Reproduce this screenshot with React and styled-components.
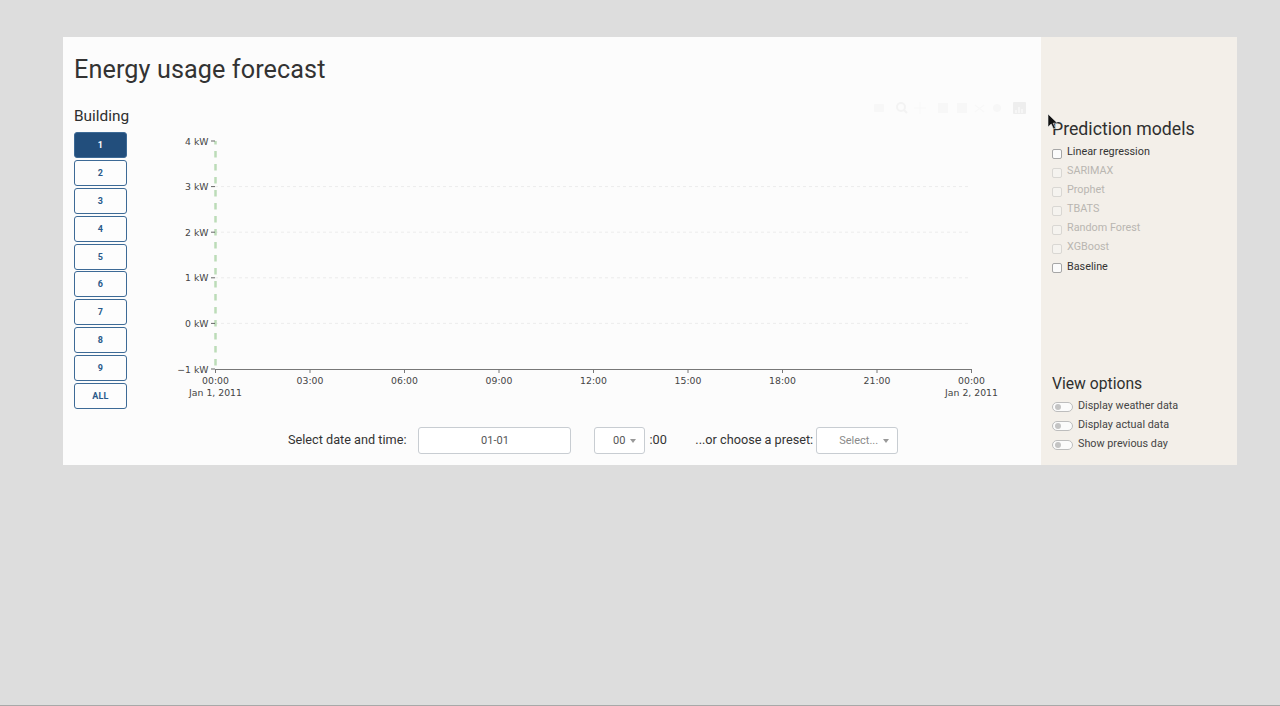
import React from "react";
import styled, { createGlobalStyle } from "styled-components";

const Global = createGlobalStyle`
  html, body { margin: 0; padding: 0; height: 100%; overflow: hidden; }
  body { background: #dddddd; font-family: Roboto, "Liberation Sans", sans-serif; }
`;

const Page = styled.div`
  box-sizing: border-box;
  height: 706px;
  padding: 37px 43px 0 63px;
  border-bottom: 1px solid #a8a8a8;
`;

const Frame = styled.div`
  display: grid;
  grid-template-columns: 978px 196px;
  height: 428px;
  background: #fcfcfc;
`;

const Main = styled.main`
  display: flex;
  flex-direction: column;
  padding: 15px 11px 0;
  min-width: 0;
`;

const Title = styled.h1`
  margin: 0;
  font-size: 25.2px;
  line-height: 36px;
  font-weight: 400;
  color: #333;
  letter-spacing: 0.1px;
`;

const Body = styled.div`
  display: flex;
  margin-top: 18px;
`;

const BuildingColumn = styled.div`
  width: 53px;
  flex: none;
`;

const SectionHeading = styled.h2`
  margin: 0;
  font-size: 17.7px;
  line-height: 21px;
  font-weight: 400;
  color: #2f2f2f;
  white-space: nowrap;
`;

const BuildingHeading = styled(SectionHeading)`
  font-size: 15.4px;
  margin-bottom: 5px;
`;

const ButtonStack = styled.div`
  display: flex;
  flex-direction: column;
  gap: 1.9px;
`;

const BuildingButton = styled.button`
  box-sizing: border-box;
  width: 53px;
  height: 26px;
  padding: 0;
  border: 1px solid #3d6a96;
  border-radius: 3px;
  background: ${(p) => (p.$active ? "#224e7c" : "#fdfdfd")};
  color: ${(p) => (p.$active ? "#ffffff" : "#2a5a8a")};
  font-family: Roboto, sans-serif;
  font-size: 9px;
  font-weight: 700;
  letter-spacing: 0.2px;
`;

const ChartWrap = styled.div`
  position: relative;
  width: 900px;
  height: 321px;
`;

const ChartSvg = styled.svg`
  display: block;
`;

const Modebar = styled.svg`
  position: absolute;
  top: -6px;
  right: 0;
`;

const Controls = styled.div`
  display: flex;
  align-items: center;
  padding-left: 214px;
  height: 27px;
  font-size: 12.7px;
  color: #333;
`;

const ControlLabel = styled.span`
  white-space: nowrap;
  margin-right: ${(p) => p.$gap || 0}px;
  margin-bottom: 2px;
`;

const TimeSuffix = styled(ControlLabel)`
  margin-left: 4px;
`;

const DateField = styled.div`
  box-sizing: border-box;
  width: 153px;
  height: 27px;
  border: 1px solid #c8cdd2;
  border-radius: 3px;
  background: #fff;
  display: flex;
  align-items: center;
  justify-content: center;
  font-size: 11px;
  color: #555;
  margin-right: 23px;
`;

const Select = styled.div`
  box-sizing: border-box;
  width: ${(p) => p.$width}px;
  height: 27px;
  border: 1px solid #c8cdd2;
  border-radius: 3px;
  background: #fff;
  display: flex;
  align-items: center;
  justify-content: flex-end;
  gap: 5px;
  padding-right: 8px;
  font-size: 11px;
  color: ${(p) => (p.$muted ? "#8a8a8a" : "#555")};
`;

const Caret = styled.span`
  width: 0;
  height: 0;
  border-left: 3.5px solid transparent;
  border-right: 3.5px solid transparent;
  border-top: 4px solid #999;
`;

const Sidebar = styled.aside`
  position: relative;
  background: #f3efe9;
  padding: 81.5px 11px 0;
  display: flex;
  flex-direction: column;
`;

const ModelHeading = styled(SectionHeading)`
  margin-bottom: 2.5px;
`;

const OptionList = styled.div`
  display: flex;
  flex-direction: column;
`;

const Option = styled.label`
  display: flex;
  align-items: center;
  height: 19.08px;
  font-size: 10.8px;
  color: ${(p) => (p.$disabled ? "#b9b6b1" : "#333")};
  white-space: nowrap;
`;

const Box = styled.span`
  box-sizing: border-box;
  width: 10px;
  height: 10px;
  margin: 4px 5px 0 0;
  border: 1px solid ${(p) => (p.$disabled ? "#d9d7d3" : "#a6a6a6")};
  border-radius: 2px;
  background: ${(p) => (p.$disabled ? "#f5f3ef" : "#fbfbfb")};
  flex: none;
`;

const ViewOptions = styled.div`
  margin-top: 97px;
`;

const ViewHeading = styled(SectionHeading)`
  font-size: 15.7px;
  margin-bottom: 2px;
`;

const Toggle = styled.span`
  box-sizing: border-box;
  position: relative;
  width: 21px;
  height: 10px;
  margin: 3px 5px 0 0;
  border: 1px solid #bdbdbd;
  border-radius: 5px;
  background: #fbfbfb;
  flex: none;
  &::after {
    content: "";
    position: absolute;
    left: 2px;
    top: 1px;
    width: 6px;
    height: 6px;
    border-radius: 50%;
    background: #c4c4c4;
  }
`;

const ToggleOption = styled(Option)`
  color: #444;
`;

const Cursor = styled.svg`
  position: absolute;
  left: 6px;
  top: 76px;
`;

const buildings = ["1", "2", "3", "4", "5", "6", "7", "8", "9", "ALL"];
const models = [
  ["Linear regression", false],
  ["SARIMAX", true],
  ["Prophet", true],
  ["TBATS", true],
  ["Random Forest", true],
  ["XGBoost", true],
  ["Baseline", false],
];
const views = ["Display weather data", "Display actual data", "Show previous day"];

const yTicks = [
  ["4 kW", 141],
  ["3 kW", 186.6],
  ["2 kW", 232.2],
  ["1 kW", 277.8],
  ["0 kW", 323.4],
  ["\u22121 kW", 369],
];
const xTicks = ["00:00", "03:00", "06:00", "09:00", "12:00", "15:00", "18:00", "21:00", "00:00"];

const ox = 127;
const oy = 106;
const chartFont = { fontFamily: "'DejaVu Sans', Verdana, sans-serif", fontSize: 9.3, fill: "#444" };

function Chart() {
  return (
    <ChartSvg width="900" height="321" viewBox="0 0 900 321">
      {yTicks.slice(1, 5).map(([l, y]) => (
        <line key={l} x1={215 - ox} x2={971 - ox} y1={y - oy} y2={y - oy} stroke="#ececec" strokeWidth="1" strokeDasharray="3 3" />
      ))}
      <line x1={215.5 - ox} x2={215.5 - ox} y1={141 - oy} y2={369 - oy} stroke="#bcdcb8" strokeWidth="2.5" strokeDasharray="6.5 6.5" strokeDashoffset="3" />
      <line x1={215 - ox} x2={971 - ox} y1={369.5 - oy} y2={369.5 - oy} stroke="#777" strokeWidth="1" />
      {yTicks.map(([l, y]) => (
        <g key={l}>
          <line x1={211 - ox} x2={215 - ox} y1={y - oy} y2={y - oy} stroke="#666" strokeWidth="1" />
          <text x={208.5 - ox} y={y - oy + 3.5} textAnchor="end" style={chartFont}>{l}</text>
        </g>
      ))}
      {xTicks.map((l, i) => {
        const x = 215.5 - ox + i * 94.5;
        return (
          <g key={i}>
            <line x1={x} x2={x} y1={369 - oy} y2={373 - oy} stroke="#777" strokeWidth="1" />
            <text x={x} y={384 - oy} textAnchor="middle" style={chartFont}>{l}</text>
          </g>
        );
      })}
      <text x={215.5 - ox} y={395.5 - oy} textAnchor="middle" style={chartFont}>Jan 1, 2011</text>
      <text x={971.5 - ox} y={395.5 - oy} textAnchor="middle" style={chartFont}>Jan 2, 2011</text>
    </ChartSvg>
  );
}

function ModebarIcons() {
  return (
    <Modebar width="160" height="16" viewBox="0 0 160 16">
      <g fill="#f7f7f7">
        <rect x="7" y="4" width="10" height="8" rx="1" />
        <circle cx="34" cy="7" r="4" fill="none" stroke="#f3f3f3" strokeWidth="2" />
        <path d="M37 10l3 3" stroke="#f3f3f3" strokeWidth="2" />
        <path d="M47 8h12M53 2v12" stroke="#f8f8f8" strokeWidth="1.2" />
        <rect x="71" y="3" width="10" height="10" />
        <rect x="90" y="3" width="10" height="10" />
        <path d="M108 12l9-7M108 5l9 7" stroke="#f8f8f8" strokeWidth="1.2" />
        <circle cx="130" cy="8" r="4" />
        <rect x="146" y="2" width="13" height="12" rx="1" fill="#eeeeee" />
        <path d="M149 13v-3M152 13v-6M155 13v-4" stroke="#fafafa" strokeWidth="1.4" />
      </g>
    </Modebar>
  );
}

export default function App() {
  return (
    <Page>
      <Global />
      <Frame>
        <Main>
          <Title>Energy usage forecast</Title>
          <Body>
            <BuildingColumn>
              <BuildingHeading>Building</BuildingHeading>
              <ButtonStack>
                {buildings.map((b) => (
                  <BuildingButton key={b} $active={b === "1"}>{b}</BuildingButton>
                ))}
              </ButtonStack>
            </BuildingColumn>
            <ChartWrap>
              <Chart />
              <ModebarIcons />
            </ChartWrap>
          </Body>
          <Controls>
            <ControlLabel $gap={12}>Select date and time:</ControlLabel>
            <DateField>01-01</DateField>
            <Select $width={51}>00<Caret /></Select>
            <TimeSuffix $gap={28.5}>:00</TimeSuffix>
            <ControlLabel $gap={3}>...or choose a preset:</ControlLabel>
            <Select $width={82} $muted>Select...<Caret /></Select>
          </Controls>
        </Main>
        <Sidebar>
          <Cursor width="12" height="18" viewBox="0 0 12 18">
            <path d="M1 1v13l3.2-3 2.3 5 2-1-2.3-4.800H10.500z" fill="#111" stroke="#eee" strokeWidth="0.6" />
          </Cursor>
          <ModelHeading>Prediction models</ModelHeading>
          <OptionList>
            {models.map(([m, d]) => (
              <Option key={m} $disabled={d}><Box $disabled={d} />{m}</Option>
            ))}
          </OptionList>
          <ViewOptions>
            <ViewHeading>View options</ViewHeading>
            <OptionList>
              {views.map((v) => (
                <ToggleOption key={v}><Toggle />{v}</ToggleOption>
              ))}
            </OptionList>
          </ViewOptions>
        </Sidebar>
      </Frame>
    </Page>
  );
}
